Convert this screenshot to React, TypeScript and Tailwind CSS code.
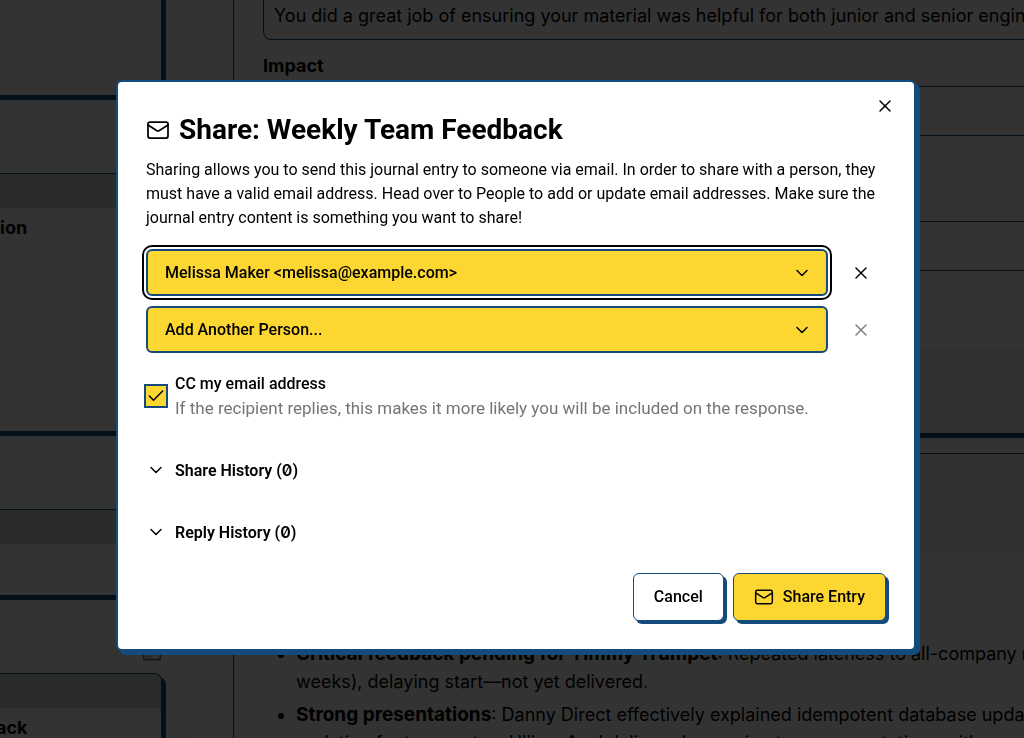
import { useState } from "react";
import { Check, ChevronDown, HardDrive, Mail, X } from "lucide-react";
import { clsx } from "clsx";

const PEOPLE = ["Melissa Maker <melissa@example.com>"];
const PLACEHOLDER = "Add Another Person...";

interface SideCardProps {
  title?: string;
  titleClassName?: string;
  className?: string;
}

function SideCard({ title, titleClassName, className }: SideCardProps) {
  return (
    <div
      className={clsx(
        "-ml-1 w-[166px] shrink-0 overflow-hidden border-r border-b border-[#134b7c] bg-white shadow-[4px_4px_0_#134b7c]",
        className,
      )}
    >
      {title !== undefined && (
        <>
          <div className="h-[34px] bg-[#cfd8d4]" />
          <p className={clsx("py-2 text-lg leading-6 font-bold", titleClassName)}>{title}</p>
        </>
      )}
    </div>
  );
}

function SideGap() {
  return (
    <div className="flex h-[77px] w-[162px] shrink-0 items-end justify-end pb-2.5">
      <HardDrive className="size-5 text-[#5d6f68]" />
    </div>
  );
}

function Sidebar() {
  return (
    <aside className="flex w-[172px] shrink-0 flex-col">
      <SideCard className="-mt-1 h-[100px]" />
      <SideGap />
      <SideCard title="ion" titleClassName="pl-1" className="h-[259px] border-t" />
      <SideGap />
      <SideCard title="" className="h-[87px] border-t" />
      <SideGap />
      <SideCard title="ack" className="h-[259px] rounded-tr-lg border-t" />
    </aside>
  );
}

function Field({ label, value = "", className }: { label: string; value?: string; className?: string }) {
  return (
    <textarea
      aria-label={label}
      readOnly
      rows={1}
      value={value}
      className={clsx(
        "block w-[900px] resize-none overflow-hidden rounded-lg border border-[#134b7c] bg-white px-2.5 text-lg leading-6",
        className,
      )}
    />
  );
}

function Entry() {
  return (
    <main className="flex min-w-0 flex-1 flex-col gap-[19px] pl-[43px]">
      <section className="flex h-[434px] shrink-0 flex-col justify-between border-b border-l border-[#134b7c] bg-white shadow-[4px_4px_0_#134b7c]">
        <div className="pl-[29px]">
          <Field
            label="Behavior"
            value="You did a great job of ensuring your material was helpful for both junior and senior engineers"
            className="h-10 rounded-t-none border-t-0 pt-1"
          />
          <h3 className="pt-2 pb-0.5 text-lg leading-9 font-bold">Impact</h3>
          <Field label="Impact" className="h-[50px]" />
          <Field label="Next steps" className="mt-[85px] h-[50px]" />
        </div>
        <div className="h-[86px] bg-[#f5f5f5]" />
      </section>
      <section className="shrink-0 border-t border-l border-[#134b7c] bg-white">
        <div className="h-[100px] bg-[#f5f5f5]" />
        <ul className="mt-[86px] ml-[62px] list-disc text-lg leading-7 whitespace-nowrap">
          <li>
            <strong className="text-[19px]">Critical feedback pending for Timmy Trumpet</strong>: Repeated lateness to
            all-company meetings (three
            <br />
            weeks), delaying start—not yet delivered.
          </li>
          <li className="mt-[5px]">
            <strong className="text-[19px]">Strong presentations</strong>: Danny Direct effectively explained idempotent
            database updates
            <br />
            updating for teammates. Ulliam Axel delivered engaging team presentations with
          </li>
        </ul>
      </section>
    </main>
  );
}

interface PersonSelectProps {
  label: string;
  value: string;
  focused?: boolean;
  disabled?: boolean;
  onChange: (value: string) => void;
}

function PersonSelect({ label, value, focused, disabled, onChange }: PersonSelectProps) {
  return (
    <div className="flex items-center gap-2">
      <div className="relative flex-1">
        <select
          aria-label={label}
          value={value}
          onChange={(e) => onChange(e.target.value)}
          className={clsx(
            "block h-[47px] w-full appearance-none rounded-md border-2 border-[#134b7c] bg-[#fdd731] px-[17px] font-medium outline-black",
            focused && "outline-2 outline-offset-2",
          )}
        >
          <option value="">{PLACEHOLDER}</option>
          {PEOPLE.map((p) => (
            <option key={p}>{p}</option>
          ))}
        </select>
        <ChevronDown strokeWidth={1.75} className="pointer-events-none absolute inset-y-0 right-4 my-auto size-5" />
      </div>
      <button
        aria-label={`Remove ${label}`}
        disabled={disabled}
        onClick={() => onChange("")}
        className="flex h-[47px] w-[50px] items-center justify-center disabled:opacity-50"
      >
        <X strokeWidth={1.75} className="size-5" />
      </button>
    </div>
  );
}

function Disclosure({ title, count }: { title: string; count: number }) {
  return (
    <button aria-expanded={false} className="flex h-[62px] w-full items-center gap-[9px] font-semibold">
      <ChevronDown strokeWidth={1.75} className="size-5" />
      <span>
        {title} (<span className="font-[Inter,sans-serif] slashed-zero">{count}</span>)
      </span>
    </button>
  );
}

const actionButton =
  "flex h-12 items-center gap-[9px] rounded-md border border-[#134b7c] px-5 font-medium shadow-[3px_3px_0_#134b7c]";

function ShareDialog() {
  const [first, setFirst] = useState(PEOPLE[0]);
  const [second, setSecond] = useState("");
  const [cc, setCc] = useState(true);

  return (
    <div
      role="dialog"
      aria-modal="true"
      aria-labelledby="share-title"
      className="relative flex w-full max-w-[800px] flex-col gap-[19px] rounded-md border-2 border-[#134b7c] bg-white p-7 font-[Roboto,sans-serif] shadow-[4px_4px_0_#134b7c]"
    >
      <button aria-label="Close" className="absolute top-3.5 right-[19px]">
        <X strokeWidth={1.75} className="size-5" />
      </button>

      <div>
        <h2 id="share-title" className="mb-2 flex items-center gap-[9px] text-[28px] leading-10 font-bold">
          <Mail strokeWidth={1.75} className="size-6" />
          Share: Weekly Team Feedback
        </h2>
        <p>
          Sharing allows you to send this journal entry to someone via email. In order to share with a person, they
          must have a valid email address. Head over to People to add or update email addresses. Make sure the journal
          entry content is something you want to share!
        </p>
      </div>

      <div className="flex flex-col gap-2.5">
        <PersonSelect label="Person 1" value={first} onChange={setFirst} focused />
        <PersonSelect label="Person 2" value={second} onChange={setSecond} disabled={!second} />
      </div>

      <label className="flex items-center gap-[9px]">
        <span className="relative size-5">
          <input
            type="checkbox"
            checked={cc}
            onChange={(e) => setCc(e.target.checked)}
            className="block size-5 appearance-none ring-2 ring-[#134b7c] checked:bg-[#fdd731]"
          />
          {cc && <Check strokeWidth={1.75} className="pointer-events-none absolute inset-0 size-5" />}
        </span>
        <span>
          <span className="block font-medium">CC my email address</span>
          <span className="block text-[17px] leading-6 text-[#757575]">
            If the recipient replies, this makes it more likely you will be included on the response.
          </span>
        </span>
      </label>

      <div>
        <Disclosure title="Share History" count={0} />
        <Disclosure title="Reply History" count={0} />
        <div className="mt-2.5 flex justify-end gap-[9px]">
          <button className={clsx(actionButton, "bg-white")}>Cancel</button>
          <button className={clsx(actionButton, "bg-[#fdd731]")}>
            <Mail strokeWidth={1.75} className="size-5" />
            Share Entry
          </button>
        </div>
      </div>
    </div>
  );
}

export default function App() {
  return (
    <div className="flex h-screen overflow-hidden bg-white font-[Inter,sans-serif] text-black">
      <Sidebar />
      <div className="w-[18px] shrink-0 border-x border-[#eee] bg-[#f8f8f8]" />
      <Entry />
      <div className="fixed inset-0 flex items-start justify-center overflow-auto bg-black/80 pt-20 pl-2">
        <ShareDialog />
      </div>
    </div>
  );
}
